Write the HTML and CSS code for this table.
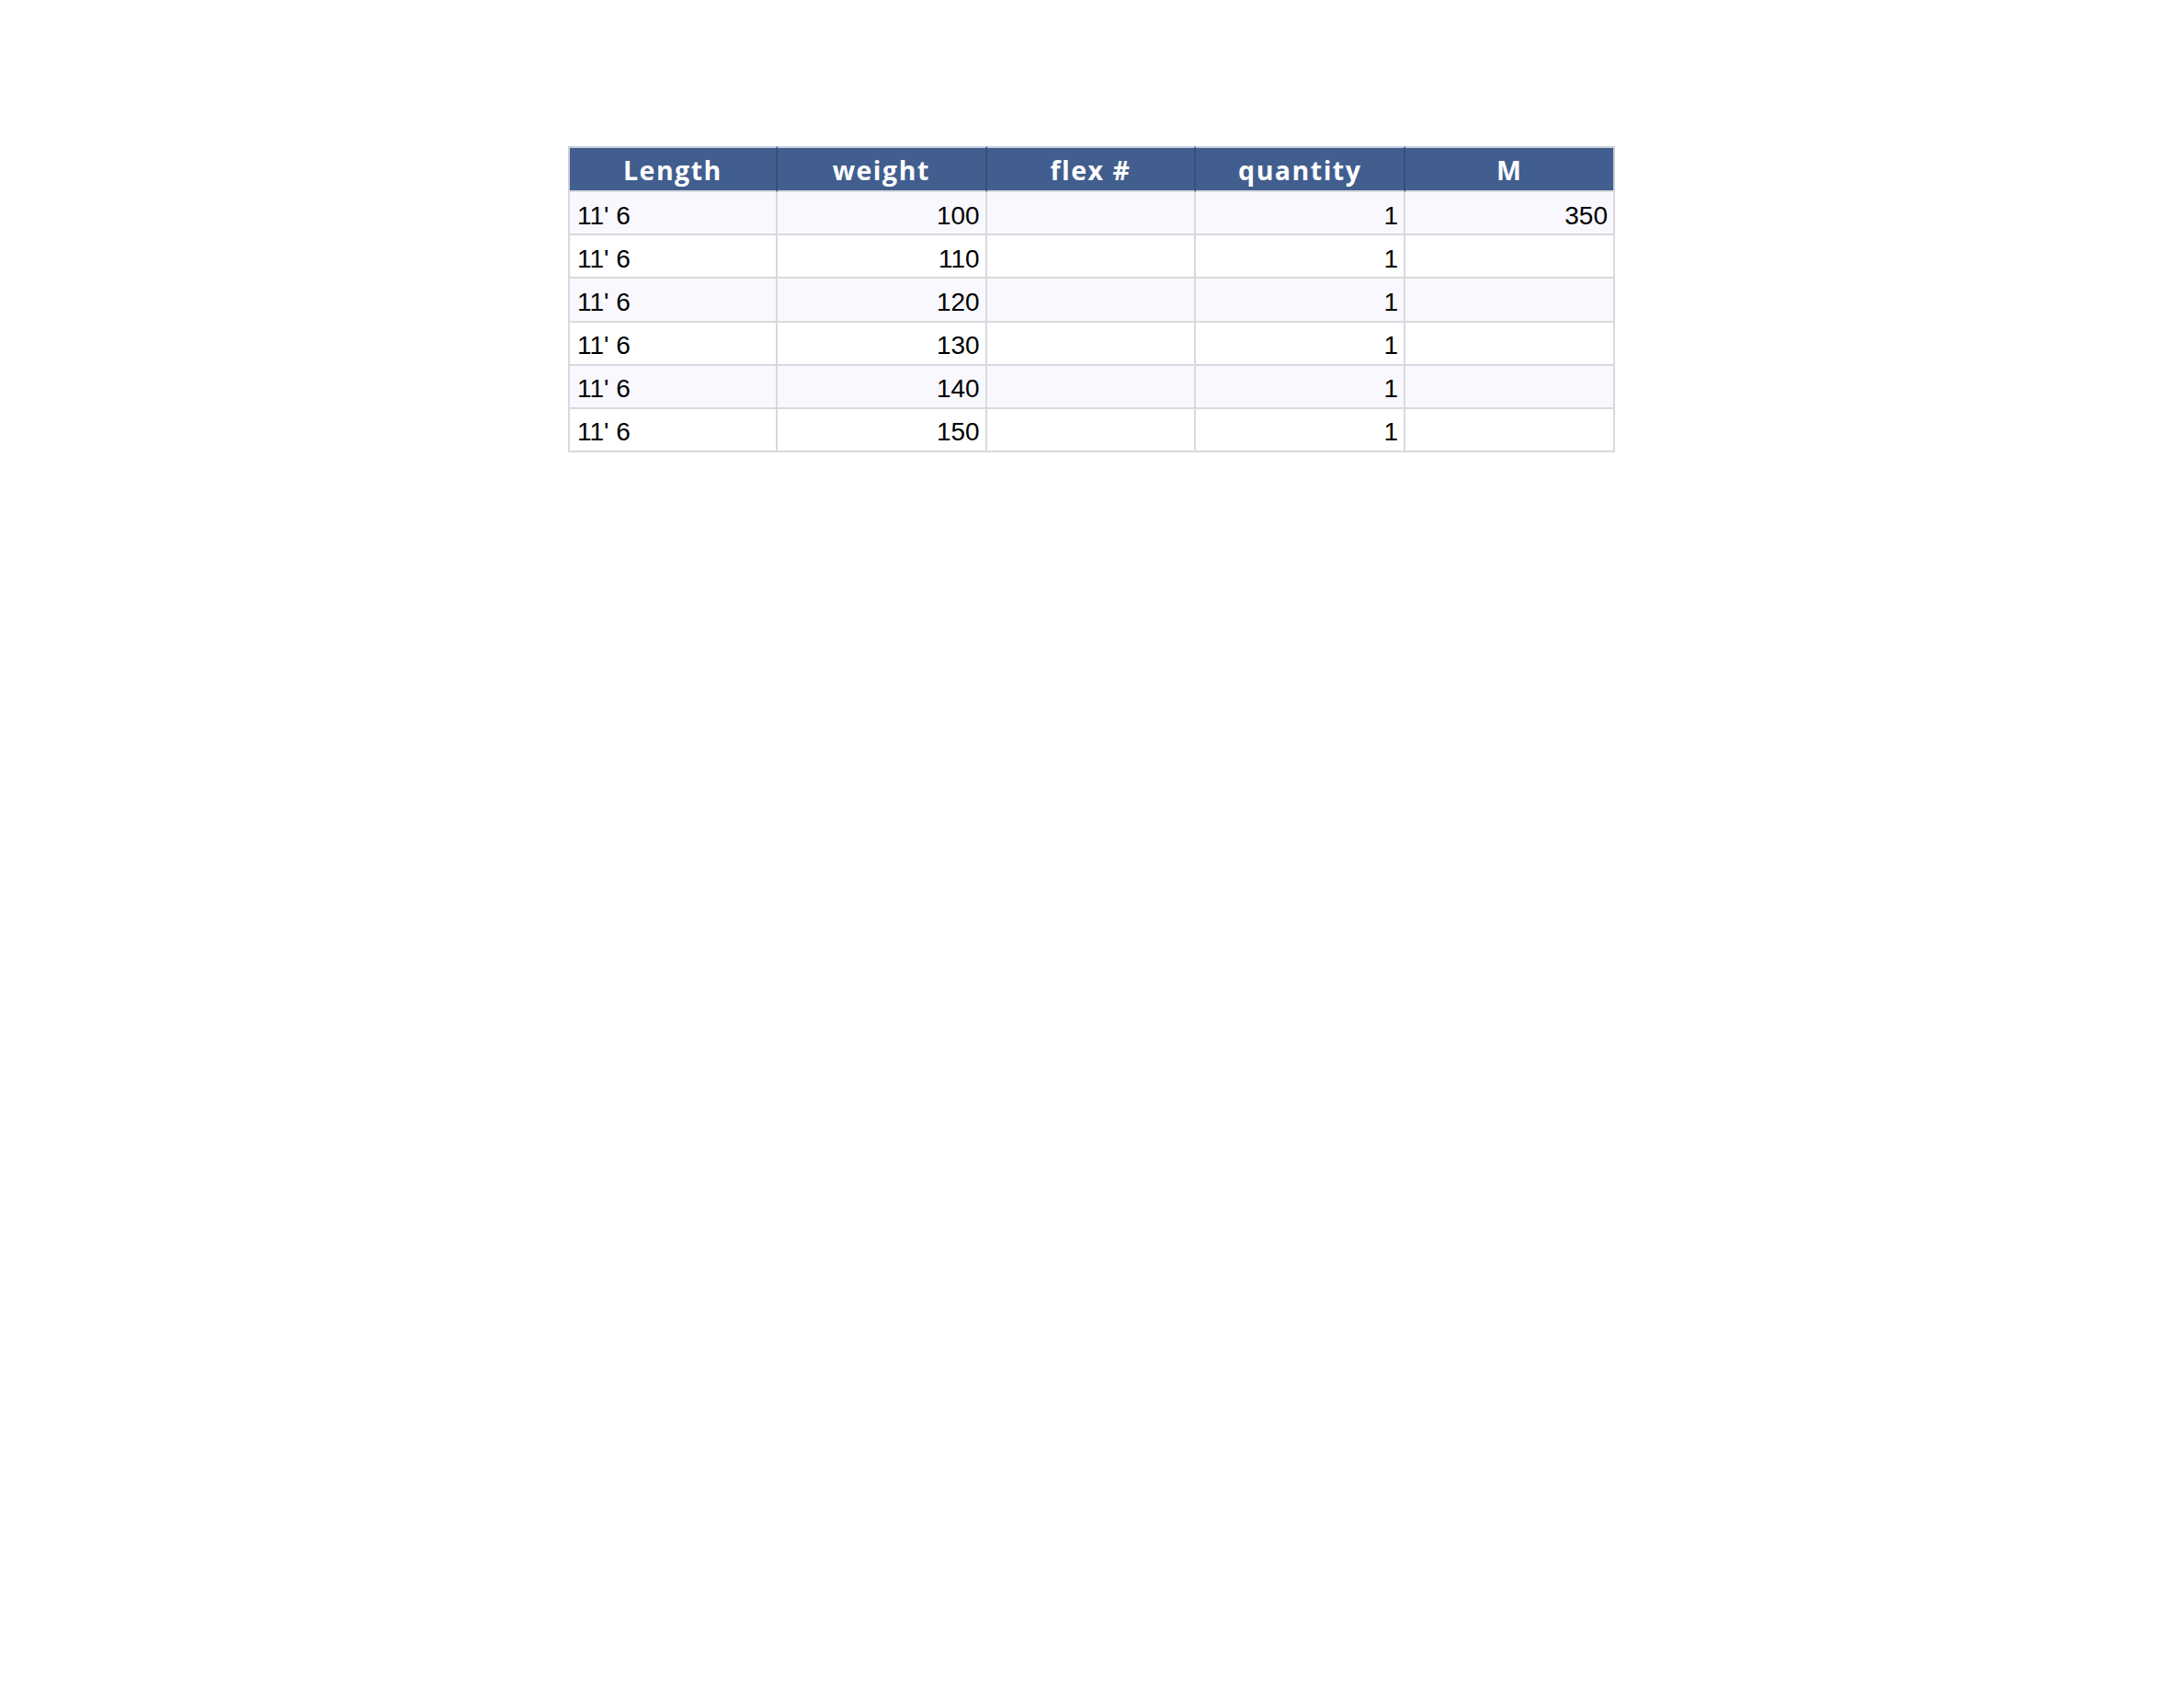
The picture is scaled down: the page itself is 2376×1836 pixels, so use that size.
FILE: index.html
```html
<!DOCTYPE html>
<html lang="en">
<head>
<meta charset="utf-8">
<title>Table</title>
<link rel="stylesheet" href="styles.css">
</head>
<body>
<div class="page">
  <table class="sheet">
    <thead>
      <tr>
        <th>Length</th>
        <th>weight</th>
        <th>flex #</th>
        <th>quantity</th>
        <th>M</th>
      </tr>
    </thead>
    <tbody>
      <tr class="alt"><td>11' 6</td><td class="num">100</td><td></td><td class="num">1</td><td class="num">350</td></tr>
      <tr><td>11' 6</td><td class="num">110</td><td></td><td class="num">1</td><td></td></tr>
      <tr class="alt"><td>11' 6</td><td class="num">120</td><td></td><td class="num">1</td><td></td></tr>
      <tr><td>11' 6</td><td class="num">130</td><td></td><td class="num">1</td><td></td></tr>
      <tr class="alt"><td>11' 6</td><td class="num">140</td><td></td><td class="num">1</td><td></td></tr>
      <tr><td>11' 6</td><td class="num">150</td><td></td><td class="num">1</td><td></td></tr>
    </tbody>
  </table>
</div>
</body>
</html>
```
FILE: styles.css
```css
html, body {
  margin: 0;
  padding: 0;
  background: #ffffff;
}

.page {
  padding: 159px 0 0 618px;
}

.sheet {
  width: 1139px;
  table-layout: fixed;
  border-collapse: separate;
  border-spacing: 0;
}

.sheet th,
.sheet td {
  width: 20%;
  box-sizing: border-box;
  border-right: 2px solid #d9d9de;
  border-bottom: 2px solid #d9d9de;
  padding: 0 6px 0 8px;
  overflow: hidden;
  white-space: nowrap;
}

.sheet th:first-child,
.sheet td:first-child {
  border-left: 2px solid #d9d9de;
}

.sheet th {
  background: #415e8e;
  color: #ffffff;
  font-family: "Open Sans", "Noto Sans", sans-serif;
  font-weight: 700;
  font-size: 28.5px;
  letter-spacing: 1.5px;
  line-height: 30px;
  text-align: center;
  padding: 9px 8px 7px;
  border-top: 2px solid #c9cfdb;
  border-right-color: #35507c;
  height: 50px;
}

.sheet th:first-child {
  border-left-color: #c9cfdb;
}

.sheet th:last-child {
  border-right-color: #c9cfdb;
}

.sheet td {
  font-family: "Liberation Sans", Arial, sans-serif;
  font-size: 28px;
  line-height: 30px;
  color: #000000;
  padding-top: 10.5px;
  padding-bottom: 4.7px;
  height: 47.2px;
  background: #ffffff;
}

.sheet tr.alt td {
  background: #f8f8fe;
}

.sheet td.num {
  text-align: right;
}
```
